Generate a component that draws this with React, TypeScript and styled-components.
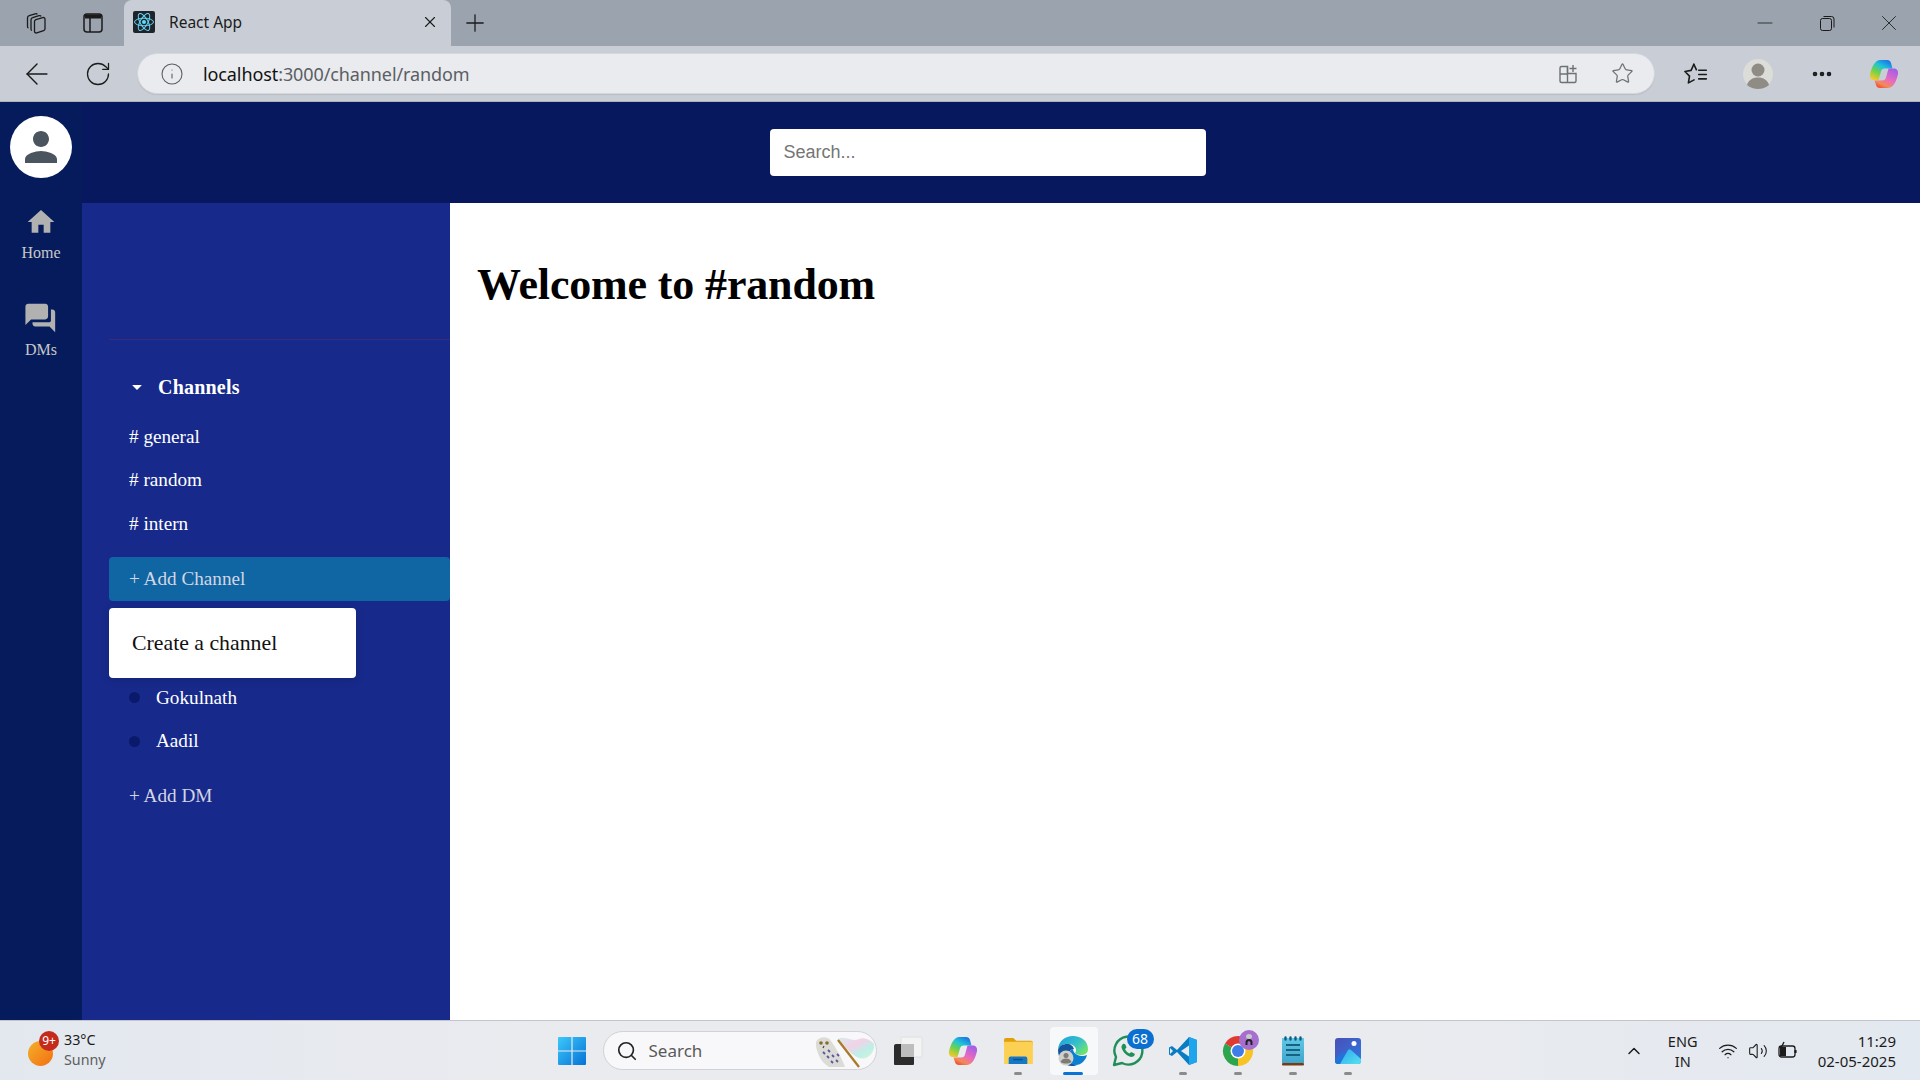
import React from "react";
import styled, { createGlobalStyle } from "styled-components";
import { ArrowLeft, ChevronUp, Info, Minus, MoreHorizontal, Plus, RotateCw, Search, Star, Volume2, Wifi, X } from "lucide-react";

const GlobalStyle = createGlobalStyle`
  html, body { margin: 0; padding: 0; height: 100%; overflow: hidden; }
  body { font-family: "Liberation Serif", "Times New Roman", serif; }
  * { box-sizing: border-box; }
`;

const Screen = styled.div`
  width: 1920px;
  height: 1080px;
  display: flex;
  flex-direction: column;
  overflow: hidden;
  background: #fff;
`;

/* ---- browser window ---- */
const TabStrip = styled.div`
  height: 46px;
  background: #9aa3ae;
  display: flex;
  align-items: center;
  color: #1b1b1b;
`;

const StripButton = styled.div<{ $w: number }>`
  width: ${(p) => p.$w}px;
  display: flex;
  justify-content: center;
  align-items: center;
  flex: none;
`;

const Tab = styled.div`
  width: 327px;
  height: 46px;
  background: #c9ced6;
  border-radius: 8px 8px 0 0;
  display: flex;
  align-items: center;
  padding: 0 12px 2px 9px;
  font-family: "Noto Sans", sans-serif;
  font-size: 15.5px;
  gap: 14px;
`;

const TabTitle = styled.span`
  flex: 1;
`;

const WindowControls = styled.div`
  margin-left: auto;
  display: flex;
`;

const WindowButton = styled.div`
  width: 62px;
  display: flex;
  justify-content: center;
  align-items: center;
`;

const Toolbar = styled.div`
  height: 56px;
  background: #c9ced6;
  border-bottom: 1px solid #aeb2b9;
  display: flex;
  align-items: center;
  flex: none;
  color: #1b1b1b;
`;

const ToolButton = styled.div<{ $w: number }>`
  width: ${(p) => p.$w}px;
  flex: none;
  display: flex;
  justify-content: center;
  align-items: center;
`;

const AddressBar = styled.div`
  width: 1518px;
  height: 41px;
  margin-left: 15px;
  border-radius: 21px;
  background: #e9ebee;
  border: 1px solid #d4d7dc;
  box-shadow: 0 1px 1px #b9bdc4;
  display: flex;
  align-items: center;
  padding-left: 22px;
  font-family: "Noto Sans", sans-serif;
  font-size: 18px;
  color: #5b5e63;
`;

const UrlText = styled.div`
  margin-left: 19px;
  flex: 1;
  letter-spacing: -0.1px;
  b { font-weight: 400; color: #111; }
`;

const AddressActions = styled.div`
  display: flex;
  align-items: center;
  gap: 32px;
  padding-right: 20px;
  color: #6e7175;
`;

/* ---- app ---- */
const AppFrame = styled.div`
  flex: 1;
  min-height: 0;
  display: flex;
`;

const Rail = styled.aside`
  width: 82px;
  flex: none;
  background: #061b5c;
  display: flex;
  flex-direction: column;
  align-items: center;
  padding-top: 14px;
`;

const Avatar = styled.div`
  width: 62px;
  height: 62px;
  border-radius: 50%;
  background: #fff;
  display: flex;
  align-items: center;
  justify-content: center;
  color: #4a5560;
  margin-bottom: 28px;
`;

const RailItem = styled.div`
  height: 95px;
  display: flex;
  flex-direction: column;
  align-items: center;
  color: #c8c8c8;
  font-size: 16px;
  line-height: 18px;
  svg { display: block; fill: #b1b1b1; margin-bottom: 6px; }
`;

const Column = styled.div`
  flex: 1;
  min-width: 0;
  display: flex;
  flex-direction: column;
`;

const Header = styled.header`
  height: 101px;
  background: #08185f;
  display: flex;
  align-items: center;
  justify-content: center;
  padding-right: 27px;
`;

const SearchInput = styled.input`
  width: 436px;
  height: 47px;
  border: none;
  outline: none;
  border-radius: 4px;
  background: #fff;
  padding: 0 14px;
  font-family: "Liberation Sans", Arial, sans-serif;
  font-size: 18px;
  &::placeholder { color: #757575; opacity: 1; }
`;

const Body = styled.div`
  flex: 1;
  min-height: 0;
  display: flex;
`;

const Sidebar = styled.nav`
  width: 368px;
  flex: none;
  background: #172a8b;
  padding-left: 27px;
  color: #fff;
`;

const SidebarTop = styled.div`
  height: 137px;
  border-bottom: 1px solid #3a2a78;
`;

const SectionHeader = styled.div`
  margin-top: 27px;
  height: 40px;
  display: flex;
  align-items: center;
  padding-left: 23px;
  gap: 16px;
  font-size: 20px;
  font-weight: 700;
  letter-spacing: 0.2px;
`;

const Caret = styled.span`
  width: 0;
  height: 0;
  border-left: 5px solid transparent;
  border-right: 5px solid transparent;
  border-top: 5px solid #fff;
  border-radius: 1px;
`;

const Rows = styled.div<{ $top: number }>`
  margin-top: ${(p) => p.$top}px;
`;

const Row = styled.div`
  height: 43.6px;
  display: flex;
  align-items: center;
  padding-left: 20px;
  font-size: 19.2px;
`;

const Dot = styled.span`
  width: 11px;
  height: 11px;
  border-radius: 50%;
  background: #0a1a6b;
  margin-right: 16px;
`;

const AddWrap = styled.div<{ $top: number }>`
  position: relative;
  margin-top: ${(p) => p.$top}px;
`;

const AddRow = styled.div<{ $active?: boolean }>`
  height: 44px;
  display: flex;
  align-items: center;
  padding-left: 20px;
  font-size: 19.2px;
  color: #d3d6e4;
  border-radius: 4px;
  background: ${(p) => (p.$active ? "#1065a3" : "transparent")};
`;

const Popup = styled.div`
  position: absolute;
  top: 51px;
  left: 0;
  width: 247px;
  height: 70px;
  background: #fff;
  border-radius: 4px;
  box-shadow: 0 2px 8px rgba(0, 0, 0, 0.15);
  display: flex;
  align-items: center;
  padding: 1px 0 0 23px;
  font-size: 21.8px;
  color: #111;
`;

const Main = styled.main`
  flex: 1;
  background: #fff;
  padding: 56px 27px 0;
`;

const Title = styled.h1`
  margin: 0;
  font-size: 44px;
  line-height: 52px;
  font-weight: 700;
  letter-spacing: -0.15px;
  color: #000;
`;

/* ---- taskbar ---- */
const Taskbar = styled.footer`
  height: 60px;
  flex: none;
  background: linear-gradient(90deg, #e3e8ef 0%, #eaebef 30%, #eaebef 70%, #e3e9f0 100%);
  border-top: 1px solid #c3c5ca;
  display: grid;
  grid-template-columns: 1fr auto 1fr;
  align-items: center;
  font-family: "Noto Sans", sans-serif;
`;

const Weather = styled.div`
  display: flex;
  align-items: center;
  padding-left: 28px;
  gap: 11px;
`;

const SunWrap = styled.div`
  position: relative;
  width: 25px;
  height: 25px;
  margin-top: 6px;
  border-radius: 50%;
  background: linear-gradient(135deg, #f4b02a, #f26f12);
`;

const CountBadge = styled.span`
  position: absolute;
  top: -10px;
  left: 11px;
  width: 20px;
  height: 20px;
  border-radius: 50%;
  background: #c42b1c;
  color: #fff;
  font-size: 12px;
  line-height: 20px;
  text-align: center;
`;

const WeatherText = styled.div`
  font-size: 14.3px;
  line-height: 20px;
  padding-bottom: 2px;
  color: #1c1c1c;
  small { display: block; font-size: 14.3px; color: #5e5e5e; }
`;

const TaskIcons = styled.div`
  display: flex;
  align-items: center;
`;

const TaskCell = styled.div<{ $open?: boolean }>`
  position: relative;
  width: 55px;
  height: 48px;
  display: flex;
  align-items: center;
  justify-content: center;
  &::before {
    content: "";
    position: absolute;
    left: 4px;
    right: 3px;
    top: 0;
    bottom: 0;
    border-radius: 4px;
    background: ${(p) => (p.$open ? "#f7f8fa" : "transparent")};
  }
  svg { position: relative; overflow: visible; }
`;

const RunMark = styled.span<{ $active?: boolean }>`
  position: absolute;
  bottom: 0;
  left: 50%;
  transform: translateX(-50%);
  width: ${(p) => (p.$active ? 20 : 8)}px;
  height: 3px;
  border-radius: 2px;
  background: ${(p) => (p.$active ? "#0a74d6" : "#8b8b8b")};
`;

const TaskBadge = styled.span`
  position: absolute;
  top: 2px;
  left: 26px;
  width: 27px;
  height: 20px;
  border-radius: 10px;
  background: #0a6fd0;
  color: #fff;
  font-size: 14px;
  line-height: 20px;
  text-align: center;
`;

const SearchPill = styled.div`
  width: 274px;
  height: 39px;
  margin: 0 4px 0 3px;
  border-radius: 20px;
  background: #f8f8fa;
  border: 1px solid #d0d2d6;
  display: flex;
  align-items: center;
  padding-left: 12px;
  gap: 11px;
  font-size: 17px;
  color: #5a5a5a;
  position: relative;
`;

const PillArt = styled.div`
  position: absolute;
  right: 1px;
  top: 3px;
  display: flex;
`;

const Tray = styled.div`
  display: flex;
  align-items: center;
  justify-content: flex-end;
  padding-right: 24px;
  color: #1c1c1c;
`;

const TrayIcon = styled.div<{ $w: number }>`
  width: ${(p) => p.$w}px;
  display: flex;
  justify-content: center;
`;

const ChevronSlot = styled(TrayIcon)`
  margin-right: 5px;
`;

const Lang = styled.div`
  width: 62px;
  font-size: 14.5px;
  line-height: 20px;
  text-align: center;
  margin-right: -1px;
`;

const Clock = styled.div`
  margin-left: 15px;
  font-size: 15px;
  line-height: 20px;
  text-align: right;
`;

/* ---- drawn icons ---- */
const PersonIcon = () => (
  <svg width="48" height="48" viewBox="0 0 24 24" fill="currentColor">
    <path d="M12 12c2.21 0 4-1.79 4-4s-1.79-4-4-4-4 1.79-4 4 1.79 4 4 4zm0 2c-2.67 0-8 1.34-8 4v2h16v-2c0-2.66-5.33-4-8-4z" />
  </svg>
);

const HomeIcon = () => (
  <svg width="32" height="32" viewBox="0 0 24 24">
    <path d="M10 20v-6h4v6h5v-8h3L12 3 2 12h3v8z" />
  </svg>
);

const ChatIcon = () => (
  <svg width="34" height="34" viewBox="0 0 24 24">
    <path d="M20 6h-1v8c0 .55-.45 1-1 1H6v1c0 1.1.9 2 2 2h10l4 4V8c0-1.1-.9-2-2-2zm-3 5V4c0-1.1-.9-2-2-2H3c-1.1 0-2 .9-2 2v13l4-4h10c1.1 0 2-.9 2-2z" />
  </svg>
);

const CollectionsIcon = () => (
  <svg width="24" height="24" viewBox="0 0 24 24" fill="none" stroke="currentColor" strokeWidth="1.3" strokeLinejoin="round">
    <path d="M11.500 10.500c0-1 .5-1.600 1.400-1.900l6.800-2c1.300-.4 2.300.4 2.300 1.700v9.400c0 1-.5 1.600-1.400 1.900l-6.800 2.300c-1.300.4-2.300-.4-2.300-1.700z" />
    <path d="M9 19.500c-.7-.2-1-.8-1-1.600V9c0-1.200.6-2 1.700-2.300l6.300-2c.9-.3 1.700-.1 2.200.6" />
    <path d="M5.500 17c-.7-.2-1-.8-1-1.600V7c0-1.200.6-2 1.700-2.300l6-1.900c.9-.3 1.700-.1 2.200.6" />
  </svg>
);

const VerticalTabsIcon = () => (
  <svg width="22" height="22" viewBox="0 0 22 22" fill="none" stroke="currentColor" strokeWidth="1.500">
    <rect x="2" y="2" width="18" height="18" rx="3" />
    <path d="M3 2.500h16v4H3z" fill="currentColor" stroke="none" />
    <path d="M8 6v14" />
  </svg>
);

const ReactFavicon = () => (
  <svg width="22" height="22" viewBox="0 0 22 22">
    <rect width="22" height="22" rx="2" fill="#20232a" />
    <circle cx="11" cy="11" r="2" fill="#61dafb" />
    <g fill="none" stroke="#61dafb" strokeWidth="1">
      <ellipse cx="11" cy="11" rx="9.500" ry="3.800" />
      <ellipse cx="11" cy="11" rx="9.500" ry="3.800" transform="rotate(60 11 11)" />
      <ellipse cx="11" cy="11" rx="9.500" ry="3.800" transform="rotate(120 11 11)" />
    </g>
  </svg>
);

const RestoreIcon = () => (
  <svg width="16" height="16" viewBox="0 0 16 16" fill="none" stroke="currentColor" strokeWidth="1">
    <rect x="1.500" y="3.500" width="11" height="12" rx="2" />
    <path d="M4.500 1.500h8a2.500 2.500 0 0 1 2.500 2.500v8.500" />
  </svg>
);

const AppsAddIcon = () => (
  <svg width="22" height="22" viewBox="0 0 22 22" fill="none" stroke="currentColor" strokeWidth="1.400">
    <path d="M10.500 3.500h-6a1.500 1.500 0 0 0-1.500 1.500v13a1.500 1.500 0 0 0 1.500 1.500h13a1.500 1.500 0 0 0 1.500-1.500v-7.500H10.500z" />
    <path d="M10.500 3.500v16M3 11h7.500" />
    <path d="M16 2v7M12.500 5.500h7" />
  </svg>
);

const FavoritesIcon = () => (
  <svg width="26" height="26" viewBox="0 0 24 24" fill="none" stroke="currentColor" strokeWidth="1.500" strokeLinejoin="round" strokeLinecap="round">
    <path d="M10 3 7.500 8.700 1.800 9.700l4.200 4.200-1 6.300 5.200-2.800" />
    <path d="M10 3l2.300 5" />
    <path d="M14.500 8.500h7M14.500 12.500h7M14.500 16.500h7" />
  </svg>
);

const ProfileIcon = () => (
  <svg width="30" height="30" viewBox="0 0 30 30">
    <circle cx="15" cy="15" r="15" fill="#dcdcd8" />
    <circle cx="15" cy="11" r="6.500" fill="#8f8b85" />
    <path d="M4 26c1.500-5 5.500-7.500 11-7.500s9.500 2.500 11 7.500c-3 2.600-7 4-11 4s-8-1.400-11-4z" fill="#8f8b85" />
  </svg>
);

const CopilotIcon = ({ size }: { size: number }) => (
  <svg width={size} height={size} viewBox="0 0 32 32">
    <defs>
      <linearGradient id="cpA" x1="0.800" y1="0" x2="0.200" y2="1">
        <stop offset="0" stopColor="#1b6fe8" />
        <stop offset="0.350" stopColor="#1ec4d8" />
        <stop offset="0.650" stopColor="#6fd24a" />
        <stop offset="1" stopColor="#f6c92b" />
      </linearGradient>
      <linearGradient id="cpC" x1="0.800" y1="0" x2="0.200" y2="1">
        <stop offset="0" stopColor="#a05ee8" />
        <stop offset="0.500" stopColor="#e86ac0" />
        <stop offset="0.800" stopColor="#f48a5a" />
        <stop offset="1" stopColor="#ef4b2a" />
      </linearGradient>
    </defs>
    <path d="M12 2h7c2 0 3.500 1 4 3l1.500 5.500H17c-2.500 0-3.500 1-4 3l-2.500 8.500H6c-3 0-4.500-2.500-4-5.500C3 12 6 2 12 2z" fill="url(#cpA)" />
    <path d="M26 10.500c3 0 4.500 2.500 4 5.500-1 5-4 14-10 14h-8c-2 0-3.500-1-4-3L6.500 22.500H14c2.500 0 3.500-1 4-3l2.500-9z" fill="url(#cpC)" />
  </svg>
);

const WindowsLogo = () => (
  <svg width="30" height="30" viewBox="0 0 30 30">
    <defs>
      <linearGradient id="winA" x1="0" y1="0" x2="1" y2="1">
        <stop offset="0" stopColor="#3cc8fa" />
        <stop offset="1" stopColor="#0672d6" />
      </linearGradient>
    </defs>
    <path d="M1 2a1 1 0 0 1 1-1h12.400v13.400H1zM15.600 1H28a1 1 0 0 1 1 1v12.400H15.600zM1 15.600h13.400V29H2a1 1 0 0 1-1-1zM15.600 15.600H29V28a1 1 0 0 1-1 1H15.600z" fill="url(#winA)" />
  </svg>
);

const OwlArt = () => (
  <svg width="60" height="33" viewBox="0 0 60 33">
    <defs>
      <linearGradient id="flagA" x1="0" y1="0" x2="1" y2="1">
        <stop offset="0" stopColor="#d5ecef" />
        <stop offset="0.400" stopColor="#f2d2e6" />
        <stop offset="0.700" stopColor="#bdf0e8" />
        <stop offset="1" stopColor="#d8f3d0" />
      </linearGradient>
    </defs>
    <path d="M22 5c6-6 14 3 22-1 5-2 12 1 15 5 1 6-3 12-8 14-6 2-12-2-17-7z" fill="url(#flagA)" />
    <path d="M23 5 44 32" stroke="#a67c2a" strokeWidth="2.300" />
    <path d="M1 7c3-6 12-6 15-1 5 7 11 17 14 26H14C6 28 0 15 1 7z" fill="#dcdcd6" />
    <circle cx="6" cy="8" r="1.800" fill="#8a6a2a" />
    <circle cx="12" cy="8" r="1.800" fill="#8a6a2a" />
    <path d="M9 11l-1 2" stroke="#444" strokeWidth="1.200" />
    <path d="M8 17l2 2M13 15l2 2M12 21l2 2M17 20l2 2M16 26l2 2M21 25l2 2M22 19l2 2" stroke="#5f54a0" strokeWidth="1.800" />
  </svg>
);

const TaskViewIcon = () => (
  <svg width="30" height="30" viewBox="0 0 30 30">
    <rect x="8" y="1" width="21" height="20" rx="1" fill="#f3f3f3" stroke="#e0e0e0" />
    <path d="M1 10a2 2 0 0 1 2-2h5v13h13v7a1 1 0 0 1-1 1H2a1 1 0 0 1-1-1z" fill="#2c2c2c" />
    <rect x="8" y="8" width="13" height="13" fill="#bdbdbd" />
  </svg>
);

const FolderIcon = () => (
  <svg width="30" height="27" viewBox="0 0 32 29">
    <path d="M1 3a2 2 0 0 1 2-2h8l3 3h16a2 2 0 0 1 2 2v3H1z" fill="#e0a106" />
    <rect x="1" y="5" width="31" height="24" rx="1" fill="#fcd053" />
    <path d="M6 29v-6a2 2 0 0 1 2-2h16a2 2 0 0 1 2 2v6z" fill="#1578c6" />
    <rect x="11" y="23.500" width="10" height="1.500" fill="#0c4f8a" />
  </svg>
);

const EdgeIcon = () => (
  <svg width="32" height="32" viewBox="0 0 32 32">
    <defs>
      <linearGradient id="edgeA" x1="0" y1="0" x2="1" y2="0.700">
        <stop offset="0" stopColor="#1b9de2" />
        <stop offset="0.600" stopColor="#35c1c9" />
        <stop offset="1" stopColor="#6fe36c" />
      </linearGradient>
    </defs>
    <path d="M1 14C2 6 8 1 16 1c8 0 15 5 15 13 0 4-3 6-7 6-3 0-6-1-6-2 1-1 1-2 1-3 0-3-3-6-8-6-5 0-8 2-10 5z" fill="url(#edgeA)" />
    <path d="M1 15c1-4 5-6 9-6 4 0 6 2 7 5-3 0-6 3-6 7 0 5 4 8 9 9-2 1-4 1-5 1C7 31 1 24 1 15z" fill="#14569e" />
    <path d="M16 29c-3-1-5-4-5-8 0-3 2-6 5-7 0 3 3 7 9 7 2 0 4-.5 5-1-1 5-6 10-11 10-1 0-2 0-3-1z" fill="#0d7fd0" />
    <circle cx="9" cy="23" r="7.500" fill="#cfcfcb" />
    <circle cx="9" cy="20.500" r="2.500" fill="#7e7b76" />
    <path d="M3.500 27c1-2.500 3-3.500 5.500-3.500s4.500 1 5.500 3.500c-3 2-8 2-11 0z" fill="#7e7b76" />
  </svg>
);

const WhatsAppIcon = () => (
  <svg width="32" height="32" viewBox="0 0 32 32">
    <path d="M2 30l2-8A14 14 0 1 1 10 28z" fill="none" stroke="#1f8f5a" strokeWidth="2.400" strokeLinejoin="round" />
    <path d="M11 9c-1.500 1-2 3-1 5 1.500 3.500 4 6 7.500 7.500 2 .8 4 .3 5-1.200.5-.8.3-1.500-.3-1.800l-2.500-1.200c-.7-.3-1.200-.1-1.500.4l-.7.9c-2-.8-3.600-2.400-4.500-4.500l.9-.8c.5-.4.6-1 .4-1.500l-1-2.400c-.4-.7-1.500-1-2.300-.4z" fill="#1f8f5a" />
  </svg>
);

const VSCodeIcon = () => (
  <svg width="30" height="30" viewBox="0 0 30 30">
    <path d="M21 1 9 14l-5-4-3 1.500v7L4 20l5-4 12 13 8-3V4z" fill="#0a7cc4" />
    <path d="M21 1l8 3v22l-8 3z" fill="#1fa5ec" />
    <path d="M21 9.500v11L13 15z" fill="#eaebef" />
    <path d="M2 12l3 3-3 3z" fill="#eaebef" />
  </svg>
);

const ChromeIcon = () => (
  <svg width="30" height="30" viewBox="0 0 30 30">
    <path d="M15 15 28 7.500A15 15 0 0 0 2 7.500z" fill="#e0392f" />
    <path d="M15 15 2 7.500A15 15 0 0 0 15 30z" fill="#2ea44f" />
    <path d="M15 15V30A15 15 0 0 0 28 7.500z" fill="#f7c325" />
    <circle cx="15" cy="15" r="7.500" fill="#fff" />
    <circle cx="15" cy="15" r="6" fill="#3f7de8" />
    <circle cx="26" cy="4" r="10" fill="#a66fcf" />
    <ellipse cx="26" cy="0.500" rx="3" ry="2.500" fill="#c9c9c9" />
    <path d="M22.500 9V6.500a3.500 3.500 0 0 1 7 0V9h-2V6.500a1.500 1.500 0 0 0-3 0V9z" fill="#222" />
  </svg>
);

const NotepadIcon = () => (
  <svg width="22" height="30" viewBox="0 0 22 30">
    <defs>
      <linearGradient id="noteA" x1="0" y1="0" x2="0" y2="1">
        <stop offset="0" stopColor="#62c8e6" />
        <stop offset="1" stopColor="#3ea6cd" />
      </linearGradient>
    </defs>
    <rect y="2" width="22" height="25" fill="url(#noteA)" />
    <rect y="27" width="22" height="2.500" rx="1" fill="#7a3b12" />
    <path d="M3.500 1.500v2M8.500 1.500v2M13.500 1.500v2M18.500 1.500v2" stroke="#0c5f80" strokeWidth="2.400" strokeLinecap="round" />
    <path d="M4 9h14M4 14h14M4 19h14" stroke="#17637f" strokeWidth="1.800" />
  </svg>
);

const PhotosIcon = () => (
  <svg width="28" height="28" viewBox="0 0 28 28">
    <defs>
      <linearGradient id="phA" x1="0" y1="0" x2="1" y2="1">
        <stop offset="0" stopColor="#4a4fb8" />
        <stop offset="1" stopColor="#2c7be0" />
      </linearGradient>
      <linearGradient id="phB" x1="0" y1="0" x2="1" y2="1">
        <stop offset="0" stopColor="#2fa8ee" />
        <stop offset="1" stopColor="#55e2f0" />
      </linearGradient>
    </defs>
    <rect x="1" y="1" width="26" height="26" rx="3" fill="url(#phA)" />
    <circle cx="20" cy="6.500" r="2.500" fill="#fff" />
    <path d="M1 22l8-7 6 6-6 6H4a3 3 0 0 1-3-3z" fill="#2273d8" />
    <path d="M6 27l8-14c1-1 2-1 3 0l10 9v2a3 3 0 0 1-3 3z" fill="url(#phB)" />
  </svg>
);

const BatteryIcon = () => (
  <svg width="22" height="22" viewBox="0 0 22 22" fill="none" stroke="currentColor" strokeWidth="1.300">
    <rect x="2" y="6" width="16" height="11" rx="2.500" />
    <path d="M18.500 10v3" strokeWidth="2.200" />
    <path d="M3 7h6v9H3z" fill="currentColor" stroke="none" />
    <path d="M7 2 4 8h4l-3 5" strokeWidth="1.400" />
  </svg>
);

const channels = ["general", "random", "intern"];
const people = ["Gokulnath", "Aadil"];

const App: React.FC = () => {
  return (
    <Screen>
      <GlobalStyle />
      <TabStrip>
        <StripButton $w={70}><CollectionsIcon /></StripButton>
        <StripButton $w={46}><VerticalTabsIcon /></StripButton>
        <StripButton $w={8} />
        <Tab>
          <ReactFavicon />
          <TabTitle>React App</TabTitle>
          <X size={18} strokeWidth={1.5} />
        </Tab>
        <StripButton $w={48}><Plus size={28} strokeWidth={1.1} /></StripButton>
        <WindowControls>
          <WindowButton><Minus size={24} strokeWidth={0.8} /></WindowButton>
          <WindowButton><RestoreIcon /></WindowButton>
          <WindowButton><X size={26} strokeWidth={0.8} /></WindowButton>
        </WindowControls>
      </TabStrip>
      <Toolbar>
        <ToolButton $w={74}><ArrowLeft size={34} strokeWidth={1} /></ToolButton>
        <ToolButton $w={48}><RotateCw size={28} strokeWidth={1.1} /></ToolButton>
        <AddressBar>
          <Info size={24} strokeWidth={1.1} />
          <UrlText><b>localhost</b>:3000/channel/random</UrlText>
          <AddressActions>
            <AppsAddIcon />
            <Star size={23} strokeWidth={1.3} />
          </AddressActions>
        </AddressBar>
        <ToolButton $w={82}><FavoritesIcon /></ToolButton>
        <ToolButton $w={42}><ProfileIcon /></ToolButton>
        <ToolButton $w={86}><MoreHorizontal size={24} strokeWidth={2.6} /></ToolButton>
        <ToolButton $w={38}><CopilotIcon size={32} /></ToolButton>
      </Toolbar>

      <AppFrame>
        <Rail>
          <Avatar><PersonIcon /></Avatar>
          <RailItem><HomeIcon />Home</RailItem>
          <RailItem><ChatIcon />DMs</RailItem>
        </Rail>
        <Column>
          <Header>
            <SearchInput placeholder="Search..." />
          </Header>
          <Body>
            <Sidebar>
              <SidebarTop />
              <SectionHeader><Caret />Channels</SectionHeader>
              <Rows $top={8}>
                {channels.map((c) => (
                  <Row key={c}># {c}</Row>
                ))}
              </Rows>
              <AddWrap $top={11}>
                <AddRow $active>+ Add Channel</AddRow>
                <Popup>Create a channel</Popup>
              </AddWrap>
              <Rows $top={75}>
                {people.map((p) => (
                  <Row key={p}><Dot />{p}</Row>
                ))}
              </Rows>
              <AddWrap $top={11}>
                <AddRow>+ Add DM</AddRow>
              </AddWrap>
            </Sidebar>
            <Main>
              <Title>Welcome to #random</Title>
            </Main>
          </Body>
        </Column>
      </AppFrame>

      <Taskbar>
        <Weather>
          <SunWrap><CountBadge>9+</CountBadge></SunWrap>
          <WeatherText>33°C<small>Sunny</small></WeatherText>
        </Weather>
        <TaskIcons>
          <TaskCell><WindowsLogo /></TaskCell>
          <SearchPill>
            <Search size={22} strokeWidth={1.8} color="#222" />
            Search
            <PillArt><OwlArt /></PillArt>
          </SearchPill>
          <TaskCell><TaskViewIcon /></TaskCell>
          <TaskCell><CopilotIcon size={32} /></TaskCell>
          <TaskCell><FolderIcon /><RunMark /></TaskCell>
          <TaskCell $open><EdgeIcon /><RunMark $active /></TaskCell>
          <TaskCell><WhatsAppIcon /><TaskBadge>68</TaskBadge></TaskCell>
          <TaskCell><VSCodeIcon /><RunMark /></TaskCell>
          <TaskCell><ChromeIcon /><RunMark /></TaskCell>
          <TaskCell><NotepadIcon /><RunMark /></TaskCell>
          <TaskCell><PhotosIcon /><RunMark /></TaskCell>
        </TaskIcons>
        <Tray>
          <ChevronSlot $w={26}><ChevronUp size={20} strokeWidth={1.8} /></ChevronSlot>
          <Lang>ENG<br />IN</Lang>
          <TrayIcon $w={30}><Wifi size={20} strokeWidth={1.5} /></TrayIcon>
          <TrayIcon $w={30}><Volume2 size={20} strokeWidth={1.3} /></TrayIcon>
          <TrayIcon $w={30}><BatteryIcon /></TrayIcon>
          <Clock>11:29<br />02-05-2025</Clock>
        </Tray>
      </Taskbar>
    </Screen>
  );
};

export default App;
